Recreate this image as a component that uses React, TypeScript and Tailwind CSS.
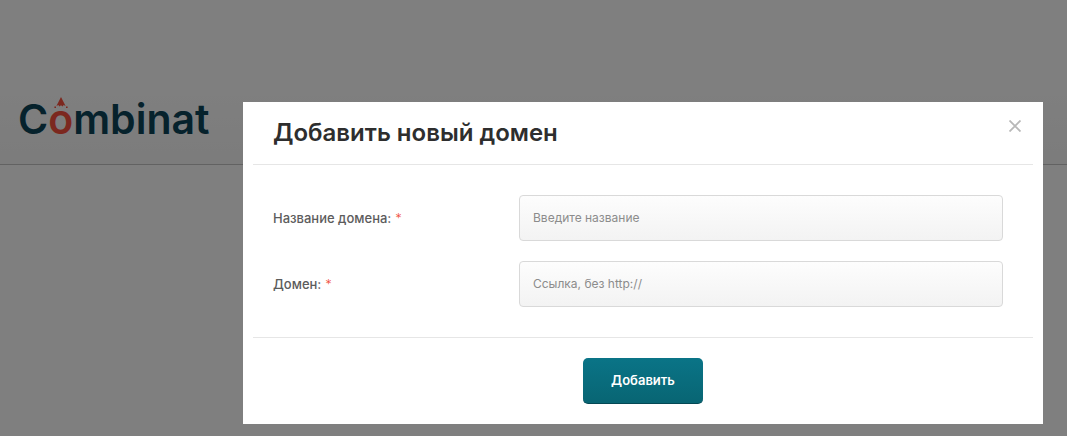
import React from "react";

const fields = [
  { id: "name", label: "Название домена:", placeholder: "Введите название" },
  { id: "domain", label: "Домен:", placeholder: "Ссылка, без http://" },
];

const Logo: React.FC = () => {
  return (
    <a href="#" className="flex text-[41px] leading-[48px] font-semibold text-[#0c4458]">
      C
      <span className="relative text-[#f9513f]">
        o
        <svg viewBox="0 0 16 12" className="absolute top-[2px] left-[5px] h-3 w-4" fill="currentColor">
          <path d="M8 0 L12.6 9 L10.6 8 L9.6 9.6 L8 8.2 L6.4 9.6 L5.4 8 L3.4 9 Z" />
          <path d="M1.4 9.4h1.6v1.6H1.4zM13 9.4h1.6v1.6H13z" />
        </svg>
      </span>
      mbinat
    </a>
  );
};

const Header: React.FC = () => {
  return (
    <header className="border-b border-[#c4c4c4] bg-linear-to-b from-white from-50% to-[#f8f8f8] px-[18px] pt-[95px] pb-[21px]">
      <Logo />
    </header>
  );
};

const DomainModal: React.FC = () => {
  return (
    <div
      role="dialog"
      aria-labelledby="modal-title"
      className="w-full max-w-[800px] bg-white px-[10px] pb-5 text-[#5c5c5c]"
    >
      <div className="flex items-start justify-between border-b border-[#e6e6e6] px-5 pt-[15px] pb-[15px]">
        <h2 id="modal-title" className="text-2xl leading-8 font-semibold text-[#2e2e2e]">
          Добавить новый домен
        </h2>
        <button type="button" aria-label="Закрыть" className="-mr-2 mt-[3px] text-[#b8b8b8]">
          <svg viewBox="0 0 12 12" className="h-3 w-3" fill="none" stroke="currentColor" strokeWidth="1.8">
            <path d="M0.5 0.5 L11.5 11.5 M11.5 0.5 L0.5 11.5" />
          </svg>
        </button>
      </div>
      <form>
        <div className="flex flex-col gap-5 py-[30px] pr-[30px] pl-5">
          {fields.map((field) => (
            <div key={field.id} className="flex items-center">
              <label htmlFor={field.id} className="flex w-[246px] shrink-0 gap-1 text-[13px] leading-5 font-medium">
                {field.label}
                <span className="font-light text-[#f0503c]">*</span>
              </label>
              <input
                id={field.id}
                type="text"
                placeholder={field.placeholder}
                className="h-[46px] min-w-0 flex-1 rounded border border-[#d9d9d9] bg-linear-to-b from-[#fdfdfd] to-[#f3f3f3] px-[13px] pb-[2px] text-xs placeholder:text-[#8c8c8c]"
              />
            </div>
          ))}
        </div>
        <div className="flex justify-center border-t border-[#e6e6e6] pt-5">
          <button
            type="submit"
            className="h-[46px] w-[120px] rounded-[5px] border-b border-[#044854] bg-linear-to-b from-[#0a7487] to-[#086573] text-[13px] font-semibold text-white"
          >
            Добавить
          </button>
        </div>
      </form>
    </div>
  );
};

const App: React.FC = () => {
  return (
    <div className="relative min-h-screen bg-white font-['Inter','Open_Sans',sans-serif]">
      <Header />
      <div className="absolute inset-0 flex items-start justify-end bg-black/50 pt-[102px] pr-6 pl-6">
        <DomainModal />
      </div>
    </div>
  );
};

export default App;
